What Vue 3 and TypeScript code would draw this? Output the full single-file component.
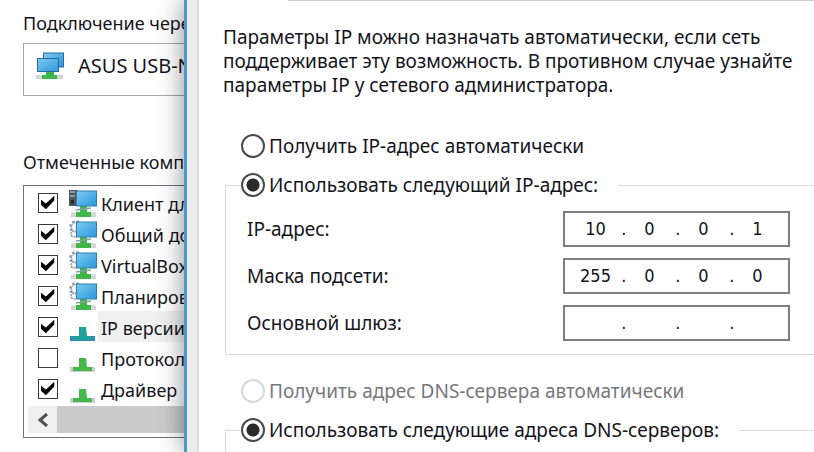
<script setup lang="ts">
import { reactive, ref } from 'vue'

type IconKind = 'client' | 'service' | 'ipv4' | 'protocol'

interface NetComponent {
  id: string
  name: string
  icon: IconKind
  enabled: boolean
  selected?: boolean
}

interface AddressField {
  id: string
  label: string
  octets: string[]
}

const components = reactive<NetComponent[]>([
  { id: 'client', name: 'Клиент для', icon: 'client', enabled: true },
  { id: 'share', name: 'Общий доступ', icon: 'service', enabled: true },
  { id: 'vbox', name: 'VirtualBox', icon: 'service', enabled: true },
  { id: 'qos', name: 'Планировщик', icon: 'service', enabled: true },
  { id: 'ipv4', name: 'IP версии 4', icon: 'ipv4', enabled: true, selected: true },
  { id: 'mux', name: 'Протокол', icon: 'protocol', enabled: false },
  { id: 'driver', name: 'Драйвер', icon: 'protocol', enabled: true },
])

const fields = reactive<AddressField[]>([
  { id: 'ip', label: 'IP-адрес:', octets: ['10', '0', '0', '1'] },
  { id: 'mask', label: 'Маска подсети:', octets: ['255', '0', '0', '0'] },
  { id: 'gateway', label: 'Основной шлюз:', octets: ['', '', '', ''] },
])

const ipMode = ref('manual')
const dnsMode = ref('manual')
</script>

<template>
  <div class="desktop">
    <section class="adapter">
      <p class="caption">Подключение через:</p>
      <div class="device">
        <svg class="device-icon" viewBox="0 0 28 28" aria-hidden="true">
          <defs>
            <linearGradient id="screen" x1="0" y1="0" x2="1" y2="1">
              <stop offset="0" stop-color="#7ccbf3" />
              <stop offset="1" stop-color="#2b97da" />
            </linearGradient>
          </defs>
          <path d="M0 23h27v4H0z" fill="#d5d3d6" />
          <path d="M10 20h8v3h3v4H6v-4h4z" fill="#3fb84a" />
          <rect x="7.5" y="1" width="20" height="14" fill="url(#screen)" stroke="#2b6a94" />
          <rect x="1.5" y="6.5" width="21" height="13" fill="url(#screen)" stroke="#2b6a94" />
        </svg>
        <span>ASUS USB-N13</span>
      </div>
      <p class="caption list-caption">Отмеченные компоненты</p>
      <div class="list">
        <ul class="rows">
          <li v-for="item in components" :key="item.id">
            <label class="row">
              <input v-model="item.enabled" class="check" type="checkbox" />
              <svg class="row-icon" viewBox="0 0 28 30" aria-hidden="true">
                <template v-if="item.icon === 'client' || item.icon === 'service'">
                  <path d="M2 24.5h25v4.500H2z" fill="#d3d5d6" />
                  <path d="M11 18h7v6h4v5H7v-5h4z" fill="#41b649" />
                  <path d="M7 22l15-2" stroke="#7fa0a4" stroke-width="1.500" />
                  <g v-if="item.icon === 'client'">
                    <path d="M0 2h9v16H0z" fill="#50565a" />
                    <path d="M1 4h5M1 8h5" stroke="#a8b0b3" stroke-width="1.500" />
                    <path d="M2 12h3v4H2z" fill="#22282b" />
                  </g>
                  <g v-else>
                    <circle cx="7" cy="8" r="5.500" fill="none" stroke="#858f94" stroke-width="2.500" stroke-dasharray="2.300 2" />
                    <circle cx="7" cy="8" r="4.500" fill="#f4f6f7" stroke="#a0a9ad" />
                    <circle cx="5" cy="15" r="3" fill="#f4f6f7" stroke="#8f999e" stroke-width="1.500" stroke-dasharray="2 1" />
                  </g>
                  <rect x="7.500" y="3" width="20" height="15" fill="url(#screen)" stroke="#347fae" />
                </template>
                <template v-else-if="item.icon === 'ipv4'">
                  <path d="M1 24h25v5H1z" fill="#3488bd" />
                  <path d="M10 15h7l1 9h5v4H4v-4h6z" fill="#1fa098" />
                </template>
                <template v-else>
                  <path d="M1 24h25v5H1z" fill="#cfcdd2" />
                  <path d="M10 15h7l1 9h5v4H4v-4h6z" fill="#45b84b" />
                </template>
              </svg>
              <span class="row-name" :class="{ selected: item.selected }">{{ item.name }}</span>
            </label>
          </li>
        </ul>
        <div class="scroll">
          <button class="scroll-btn" type="button" aria-label="Прокрутить влево">
            <svg viewBox="0 0 12 14" aria-hidden="true">
              <path d="M10 1L3 7l7 6" fill="none" stroke="#505050" stroke-width="3" />
            </svg>
          </button>
          <div class="thumb"></div>
        </div>
      </div>
    </section>

    <main class="dialog">
      <div class="page">
        <div class="tab-edge"></div>
        <p class="intro">
          Параметры IP можно назначать автоматически, если сеть<br />
          поддерживает эту возможность. В противном случае узнайте<br />
          параметры IP у сетевого администратора.
        </p>

        <label class="option">
          <input v-model="ipMode" type="radio" name="ip" value="auto" />
          <span>Получить IP-адрес автоматически</span>
        </label>

        <fieldset class="group">
          <legend>
            <label class="option">
              <input v-model="ipMode" type="radio" name="ip" value="manual" />
              <span>Использовать следующий IP-адрес:</span>
            </label>
          </legend>
          <div class="fields">
            <div v-for="field in fields" :key="field.id" class="field">
              <label :for="field.id + '-0'">{{ field.label }}</label>
              <div class="address">
                <template v-for="(_, i) in field.octets" :key="i">
                  <span v-if="i > 0" class="dot">.</span>
                  <input
                    :id="field.id + '-' + i"
                    v-model="field.octets[i]"
                    class="octet"
                    type="text"
                    maxlength="3"
                    :aria-label="field.label + ' ' + (i + 1)"
                  />
                </template>
              </div>
            </div>
          </div>
        </fieldset>

        <label class="option disabled">
          <input v-model="dnsMode" type="radio" name="dns" value="auto" disabled />
          <span>Получить адрес DNS-сервера автоматически</span>
        </label>

        <fieldset class="group">
          <legend>
            <label class="option">
              <input v-model="dnsMode" type="radio" name="dns" value="manual" />
              <span>Использовать следующие адреса DNS-серверов:</span>
            </label>
          </legend>
          <div class="fields"></div>
        </fieldset>
      </div>
    </main>
  </div>
</template>

<style>
body {
  background: #fff;
  overflow: hidden;
}
</style>

<style scoped>
.desktop {
  display: flex;
  height: 100vh;
  overflow: hidden;
  font-family: 'Noto Sans', 'Open Sans', sans-serif;
  font-size: 19px;
  line-height: 24px;
  color: #14141c;
}

p,
ul {
  margin: 0;
  padding: 0;
}

.adapter {
  flex: 0 0 184px;
  box-sizing: border-box;
  padding: 11px 0 0 23px;
  overflow: hidden;
  font-size: 18px;
  white-space: nowrap;
}

.device {
  display: flex;
  align-items: center;
  gap: 14px;
  box-sizing: border-box;
  height: 53px;
  margin-top: 8px;
  padding: 0 0 8px 12px;
  border: 1px solid #a9a9ad;
  border-right: 0;
  font-size: 20px;
}

.device-icon {
  flex: none;
  width: 28px;
  height: 28px;
}

.list-caption {
  margin-top: 54px;
}

.list {
  margin-top: 11px;
  padding: 1px 0 4px 4px;
  border: 1px solid #6f727c;
  border-right: 0;
}

.rows {
  list-style: none;
}

.row {
  display: flex;
  align-items: center;
  height: 31px;
}

.check {
  appearance: none;
  flex: none;
  box-sizing: border-box;
  width: 20px;
  height: 20px;
  margin: 0 11px 0 10px;
  border: 1px solid #3a3a3a;
  background: #fff;
}

.check:checked::before {
  content: '';
  display: block;
  width: 14px;
  height: 14px;
  margin: 2px;
  background: #000;
  clip-path: polygon(0 30%, 35% 58%, 95% 2%, 95% 36%, 35% 98%, 0 66%);
}

.row-icon {
  flex: none;
  width: 28px;
  height: 30px;
}

.row-name {
  flex: 1;
  box-sizing: border-box;
  height: 31px;
  margin-left: 1px;
  padding: 5px 0 0 3px;
}

.row-name.selected {
  background: #f0f0f0;
}

.scroll {
  display: flex;
  height: 27px;
  margin-top: 2px;
  background: #f0f0f0;
}

.scroll-btn {
  display: flex;
  align-items: center;
  justify-content: center;
  width: 29px;
  padding: 0;
  border: 0;
  background: #f0f0f0;
}

.scroll-btn svg {
  width: 12px;
  height: 14px;
}

.thumb {
  flex: 1;
  background: #cbcbcb;
}

.dialog {
  position: relative;
  flex: 1;
  min-width: 0;
  padding-left: 10px;
  border-left: 3px solid #4b96cc;
  background: #ededed;
  box-shadow: 0 0 24px rgba(0, 0, 0, 0.45);
}

.page {
  height: 100%;
  padding-left: 24px;
  border-left: 2px solid #dcdcdc;
  background: #fff;
  white-space: nowrap;
}

.tab-edge {
  height: 1px;
  margin-left: 65px;
  background: #cfcfcf;
}

.intro {
  margin: 24px 0 37px;
}

.option {
  display: flex;
  align-items: center;
  gap: 4px;
  height: 24px;
  margin-left: 18px;
}

.option input {
  appearance: none;
  flex: none;
  box-sizing: border-box;
  width: 24px;
  height: 24px;
  margin: 0;
  border: 2px solid #4a4a4a;
  border-radius: 50%;
  background: #fff;
}

.option input:checked {
  background: radial-gradient(circle, #2b2b2b 6px, #fff 7px);
}

.option.disabled {
  color: #77777d;
}

.option.disabled input {
  border-color: #d8d8d8;
}

.group {
  min-width: 0;
  margin: 15px 0 24px 2px;
  padding: 0;
  border: 1px solid #dadada;
  border-right: 0;
}

.group legend {
  margin-left: 15px;
  padding: 0 20px 0 0;
}

.group legend .option {
  margin-left: 0;
}

.fields {
  display: grid;
  gap: 11px;
  padding: 14px 24px 13px 21px;
}

.field {
  display: flex;
  align-items: center;
  justify-content: space-between;
}

.address {
  display: flex;
  align-items: center;
  justify-content: center;
  box-sizing: border-box;
  width: 227px;
  height: 36px;
  border: 2px solid #7d7d82;
  font-family: 'DejaVu Sans Condensed', 'DejaVu Sans', sans-serif;
  font-size: 18px;
}

.octet {
  width: 46px;
  padding: 0;
  border: 0;
  outline: 0;
  background: transparent;
  color: inherit;
  font: inherit;
  text-align: center;
}

.dot {
  box-sizing: border-box;
  width: 8px;
  text-align: right;
}
</style>
